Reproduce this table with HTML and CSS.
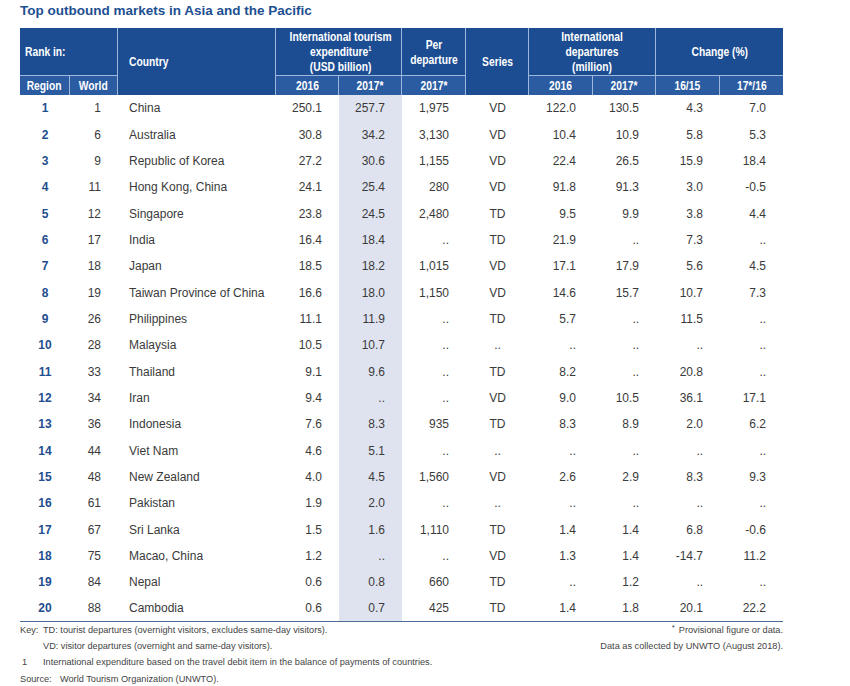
FILE: index.html
```html
<!DOCTYPE html>
<html lang="en">
<head>
<meta charset="utf-8">
<title>Top outbound markets in Asia and the Pacific</title>
<link rel="stylesheet" href="styles.css">
</head>
<body>
<div class="page">
  <h1 class="title">Top outbound markets in Asia and the Pacific</h1>
  <table class="tbl">
    <colgroup>
      <col class="w-region"><col class="w-world"><col class="w-country">
      <col class="w-63"><col class="w-63"><col class="w-64"><col class="w-63">
      <col class="w-64"><col class="w-63"><col class="w-64"><col class="w-63">
    </colgroup>
    <thead>
      <tr class="hrow1">
        <th colspan="2" class="left rank"><span class="hx hl">Rank in:</span></th>
        <th rowspan="2" class="left country-h"><span class="hx hl">Country</span></th>
        <th colspan="2"><span class="hx">International tourism<br>expenditure<sup>1</sup><br>(USD billion)</span></th>
        <th><span class="hx">Per<br>departure</span></th>
        <th rowspan="2"><span class="hx">Series</span></th>
        <th colspan="2"><span class="hx">International<br>departures<br>(million)</span></th>
        <th colspan="2" class="last"><span class="hx">Change (%)</span></th>
      </tr>
      <tr class="hrow2">
        <th class="sub"><span class="hx">Region</span></th>
        <th class="sub"><span class="hx">World</span></th>
        <th class="sub"><span class="hx">2016</span></th>
        <th class="sub"><span class="hx">2017*</span></th>
        <th class="sub"><span class="hx">2017*</span></th>
        <th class="sub"><span class="hx">2016</span></th>
        <th class="sub"><span class="hx">2017*</span></th>
        <th class="sub"><span class="hx">16/15</span></th>
        <th class="sub last"><span class="hx">17*/16</span></th>
      </tr>
    </thead>
    <tbody>
      <tr><td class="rg">1</td><td class="num">1</td><td class="cn">China</td><td class="num">250.1</td><td class="num shade">257.7</td><td class="num">1,975</td><td class="ser">VD</td><td class="num">122.0</td><td class="num">130.5</td><td class="num">4.3</td><td class="num">7.0</td></tr>
      <tr><td class="rg">2</td><td class="num">6</td><td class="cn">Australia</td><td class="num">30.8</td><td class="num shade">34.2</td><td class="num">3,130</td><td class="ser">VD</td><td class="num">10.4</td><td class="num">10.9</td><td class="num">5.8</td><td class="num">5.3</td></tr>
      <tr><td class="rg">3</td><td class="num">9</td><td class="cn">Republic of Korea</td><td class="num">27.2</td><td class="num shade">30.6</td><td class="num">1,155</td><td class="ser">VD</td><td class="num">22.4</td><td class="num">26.5</td><td class="num">15.9</td><td class="num">18.4</td></tr>
      <tr><td class="rg">4</td><td class="num">11</td><td class="cn">Hong Kong, China</td><td class="num">24.1</td><td class="num shade">25.4</td><td class="num">280</td><td class="ser">VD</td><td class="num">91.8</td><td class="num">91.3</td><td class="num">3.0</td><td class="num">-0.5</td></tr>
      <tr><td class="rg">5</td><td class="num">12</td><td class="cn">Singapore</td><td class="num">23.8</td><td class="num shade">24.5</td><td class="num">2,480</td><td class="ser">TD</td><td class="num">9.5</td><td class="num">9.9</td><td class="num">3.8</td><td class="num">4.4</td></tr>
      <tr><td class="rg">6</td><td class="num">17</td><td class="cn">India</td><td class="num">16.4</td><td class="num shade">18.4</td><td class="num">..</td><td class="ser">TD</td><td class="num">21.9</td><td class="num">..</td><td class="num">7.3</td><td class="num">..</td></tr>
      <tr><td class="rg">7</td><td class="num">18</td><td class="cn">Japan</td><td class="num">18.5</td><td class="num shade">18.2</td><td class="num">1,015</td><td class="ser">VD</td><td class="num">17.1</td><td class="num">17.9</td><td class="num">5.6</td><td class="num">4.5</td></tr>
      <tr><td class="rg">8</td><td class="num">19</td><td class="cn">Taiwan Province of China</td><td class="num">16.6</td><td class="num shade">18.0</td><td class="num">1,150</td><td class="ser">VD</td><td class="num">14.6</td><td class="num">15.7</td><td class="num">10.7</td><td class="num">7.3</td></tr>
      <tr><td class="rg">9</td><td class="num">26</td><td class="cn">Philippines</td><td class="num">11.1</td><td class="num shade">11.9</td><td class="num">..</td><td class="ser">TD</td><td class="num">5.7</td><td class="num">..</td><td class="num">11.5</td><td class="num">..</td></tr>
      <tr><td class="rg">10</td><td class="num">28</td><td class="cn">Malaysia</td><td class="num">10.5</td><td class="num shade">10.7</td><td class="num">..</td><td class="ser">..</td><td class="num">..</td><td class="num">..</td><td class="num">..</td><td class="num">..</td></tr>
      <tr><td class="rg">11</td><td class="num">33</td><td class="cn">Thailand</td><td class="num">9.1</td><td class="num shade">9.6</td><td class="num">..</td><td class="ser">TD</td><td class="num">8.2</td><td class="num">..</td><td class="num">20.8</td><td class="num">..</td></tr>
      <tr><td class="rg">12</td><td class="num">34</td><td class="cn">Iran</td><td class="num">9.4</td><td class="num shade">..</td><td class="num">..</td><td class="ser">VD</td><td class="num">9.0</td><td class="num">10.5</td><td class="num">36.1</td><td class="num">17.1</td></tr>
      <tr><td class="rg">13</td><td class="num">36</td><td class="cn">Indonesia</td><td class="num">7.6</td><td class="num shade">8.3</td><td class="num">935</td><td class="ser">TD</td><td class="num">8.3</td><td class="num">8.9</td><td class="num">2.0</td><td class="num">6.2</td></tr>
      <tr><td class="rg">14</td><td class="num">44</td><td class="cn">Viet Nam</td><td class="num">4.6</td><td class="num shade">5.1</td><td class="num">..</td><td class="ser">..</td><td class="num">..</td><td class="num">..</td><td class="num">..</td><td class="num">..</td></tr>
      <tr><td class="rg">15</td><td class="num">48</td><td class="cn">New Zealand</td><td class="num">4.0</td><td class="num shade">4.5</td><td class="num">1,560</td><td class="ser">VD</td><td class="num">2.6</td><td class="num">2.9</td><td class="num">8.3</td><td class="num">9.3</td></tr>
      <tr><td class="rg">16</td><td class="num">61</td><td class="cn">Pakistan</td><td class="num">1.9</td><td class="num shade">2.0</td><td class="num">..</td><td class="ser">..</td><td class="num">..</td><td class="num">..</td><td class="num">..</td><td class="num">..</td></tr>
      <tr><td class="rg">17</td><td class="num">67</td><td class="cn">Sri Lanka</td><td class="num">1.5</td><td class="num shade">1.6</td><td class="num">1,110</td><td class="ser">TD</td><td class="num">1.4</td><td class="num">1.4</td><td class="num">6.8</td><td class="num">-0.6</td></tr>
      <tr><td class="rg">18</td><td class="num">75</td><td class="cn">Macao, China</td><td class="num">1.2</td><td class="num shade">..</td><td class="num">..</td><td class="ser">VD</td><td class="num">1.3</td><td class="num">1.4</td><td class="num">-14.7</td><td class="num">11.2</td></tr>
      <tr><td class="rg">19</td><td class="num">84</td><td class="cn">Nepal</td><td class="num">0.6</td><td class="num shade">0.8</td><td class="num">660</td><td class="ser">TD</td><td class="num">..</td><td class="num">1.2</td><td class="num">..</td><td class="num">..</td></tr>
      <tr><td class="rg">20</td><td class="num">88</td><td class="cn">Cambodia</td><td class="num">0.6</td><td class="num shade">0.7</td><td class="num">425</td><td class="ser">TD</td><td class="num">1.4</td><td class="num">1.8</td><td class="num">20.1</td><td class="num">22.2</td></tr>
    </tbody>
  </table>
  <div class="notes">
    <div class="notes-left">
      <div class="nrow"><span class="nlab">Key:</span><span>TD: tourist departures (overnight visitors, excludes same-day visitors).</span></div>
      <div class="nrow"><span class="nlab"></span><span>VD: visitor departures (overnight and same-day visitors).</span></div>
      <div class="nrow"><span class="nlab one">1</span><span>International expenditure based on the travel debit item in the balance of payments of countries.</span></div>
      <div class="nrow"><span class="nlab src">Source:</span><span>World Tourism Organization (UNWTO).</span></div>
    </div>
    <div class="notes-right">
      <div class="nrow"><span class="ast">*</span><span>Provisional figure or data.</span></div>
      <div class="nrow">Data as collected by UNWTO (August 2018).</div>
    </div>
  </div>
</div>
</body>
</html>
```
FILE: styles.css
```css
html, body {
  margin: 0;
  padding: 0;
  background: #ffffff;
}

.page {
  padding: 0 0 0 20px;
  width: 763px;
  font-family: "Liberation Sans", Arial, sans-serif;
}

.title {
  margin: 3px 0 9px 0;
  font-size: 13.5px;
  line-height: 16px;
  font-weight: bold;
  color: #1d4f91;
}

.tbl {
  width: 763px;
  table-layout: fixed;
  border-collapse: separate;
  border-spacing: 0;
}

.w-region { width: 50px; }
.w-world { width: 48px; }
.w-country { width: 158px; }
.w-63 { width: 63px; }
.w-64 { width: 64px; }

.tbl th {
  font-family: "Liberation Sans", Arial, sans-serif;
  font-weight: bold;
  font-size: 13px;
  line-height: 15px;
  color: #ffffff;
  background: #1c4d93;
  text-align: center;
  vertical-align: middle;
  padding: 0;
  border-right: 1px solid #9fb7da;
  border-bottom: 1px solid #9fb7da;
  white-space: nowrap;
  overflow: visible;
}

.hx {
  display: inline-block;
  transform: scaleX(0.79);
  transform-origin: center center;
  white-space: nowrap;
}

.hx.hl { transform-origin: left center; }

.tbl th.last { border-right: none; }

.tbl th sup {
  font-size: 7px;
  line-height: 0;
  vertical-align: 5px;
}

.hrow1 { height: 48px; }
.hrow2 { height: 19px; }

.tbl th.sub {
  background: #2b5ca2;
  border-bottom: none;
}

.tbl th[rowspan] { border-bottom: none; }

.tbl th.left { text-align: left; }
.tbl th.rank { padding-left: 5px; }
.tbl th.country-h { padding-left: 11px; }

.tbl tbody tr { height: 26.35px; }

.tbl td {
  font-size: 12px;
  color: #3a3a3a;
  padding: 0;
  vertical-align: middle;
  white-space: nowrap;
}

.tbl td.rg {
  text-align: center;
  font-weight: bold;
  color: #1f4e8f;
}

.tbl td.num {
  text-align: right;
  padding-right: 17px;
}

.tbl td.cn {
  text-align: left;
  padding-left: 11px;
}

.tbl td.ser { text-align: center; }

.tbl td.shade { background: #dfe3ef; }

.tbl tbody tr:last-child td { border-bottom: 1px solid #4d6d99; }

.notes {
  display: flex;
  justify-content: space-between;
  align-items: flex-start;
  font-size: 9.2px;
  line-height: 16.3px;
  color: #444444;
}

.nrow { display: flex; }

.nlab {
  width: 23px;
  flex: none;
}

.nlab.one { padding-left: 2px; width: 21px; }
.nlab.src { width: 40px; }

.notes-right { text-align: right; }
.notes-right .nrow { justify-content: flex-end; }

.ast {
  font-size: 8px;
  position: relative;
  top: -2px;
  margin-right: 4px;
}
```
